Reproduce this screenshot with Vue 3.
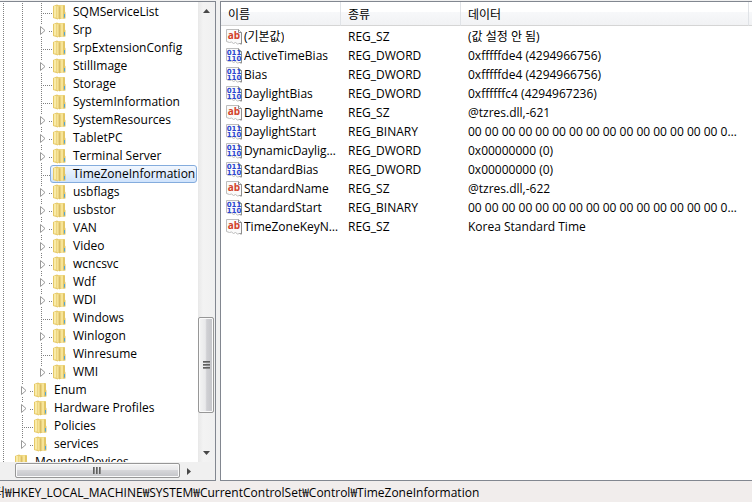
<template>
  <div class="regedit">
    <main class="panes">
      <section class="pane tree-pane">
        <ul class="tree">
          <li v-for="item in keys" :key="item.name" class="node">
            <span v-for="n in item.level" :key="n" class="guide"></span>
            <span class="branch" :class="{ root: item.level === 0, last: item.last }">
              <button v-if="item.open" class="expander" type="button" :aria-label="item.name + ' 확장'">
                <svg width="7" height="9" viewBox="0 0 7 9"><path d="M.5.5 5 4.500.5 8.500Z" fill="#fff" stroke="#989898" /></svg>
              </button>
            </span>
            <button class="entry" :class="{ selected: item.name === current }" type="button" @click="current = item.name">
              <svg class="folder" width="14" height="16" viewBox="0 0 14 16">
                <path d="M0 2 4 .5l1 .5v14.500l-5-1.500Z" fill="#e6c967" />
                <path d="M5 1h6.500l.5 1v12.500l-7 .5Z" fill="#ecd47a" />
                <path d="M1 2h2v11.500H1Z" fill="#f9eba8" />
                <path d="M3 1.500 7 2.500v13l-4-1.500Z" fill="#edd582" />
                <path d="M4.500 2.500v11.500" stroke="#f6e496" />
                <path d="M6.500 2.500h1v12.500h-1Z" fill="#c9a84a" />
                <path d="M7.500 1.500h2.500v13H7.500Z" fill="#f7e498" />
                <path d="M10 1.500h2v6l.5 1v6H10Z" fill="#e3c665" />
                <path d="M11.500 10v3.500" stroke="#4fa5d8" />
              </svg>
              <span class="key-name">{{ item.name }}</span>
            </button>
          </li>
        </ul>
        <div class="scrollbar vertical">
          <button class="arrow" type="button" aria-label="위로">
            <svg width="7" height="4" viewBox="0 0 7 4"><path d="M0 4 3.500 0 7 4Z" fill="#484848" /></svg>
          </button>
          <div class="space before"></div>
          <div class="thumb"><i></i><i></i><i></i></div>
          <div class="space after"></div>
          <button class="arrow" type="button" aria-label="아래로">
            <svg width="7" height="4" viewBox="0 0 7 4"><path d="M0 0 3.500 4 7 0Z" fill="#484848" /></svg>
          </button>
        </div>
        <div class="scrollbar horizontal">
          <div class="space before"></div>
          <div class="thumb"><i></i><i></i><i></i></div>
          <button class="arrow" type="button" aria-label="오른쪽으로">
            <svg width="4" height="7" viewBox="0 0 4 7"><path d="M0 0 4 3.500 0 7Z" fill="#484848" /></svg>
          </button>
        </div>
        <div class="corner"></div>
      </section>

      <section class="pane list-pane">
        <table class="values">
          <colgroup>
            <col class="col-name">
            <col class="col-type">
            <col>
            <col class="col-rest">
          </colgroup>
          <thead>
            <tr>
              <th>이름</th>
              <th>종류</th>
              <th>데이터</th>
              <td></td>
            </tr>
          </thead>
          <tbody>
            <tr v-for="value in values" :key="value.name">
              <td class="name">
                <div class="name-cell">
                  <svg class="value-icon" width="17" height="16" viewBox="0 0 17 16">
                    <path d="M.5.5h12l3 3v11.500l-2-.5-2 .5-2-1.500-2 1-2-1.500-2 .5-3-1Z" fill="#fafafa" stroke="#bdbdbd" />
                    <path d="M12.500.5v3h3M15.500 3.500v11.500l-2-.5" fill="none" stroke="#8e8e8e" />
                    <text v-if="value.type === 'REG_SZ'" class="glyph-ab" x="8" y="10" text-anchor="middle">ab</text>
                    <template v-else>
                      <text class="glyph-bin" x="8" y="7" text-anchor="middle">011</text>
                      <text class="glyph-bin" x="8" y="13" text-anchor="middle">110</text>
                    </template>
                  </svg>
                  <span class="ellipsis">{{ value.name }}</span>
                </div>
              </td>
              <td>{{ value.type }}</td>
              <td class="ellipsis">{{ value.data }}</td>
              <td></td>
            </tr>
          </tbody>
        </table>
      </section>
    </main>
    <footer class="status"><span class="path">터₩HKEY_LOCAL_MACHINE₩SYSTEM₩CurrentControlSet₩Control₩{{ current }}</span></footer>
  </div>
</template>

<script setup>
import { ref } from 'vue'

const current = ref('TimeZoneInformation')

const keys = [
  { name: 'SQMServiceList', level: 2 },
  { name: 'Srp', level: 2, open: true },
  { name: 'SrpExtensionConfig', level: 2 },
  { name: 'StillImage', level: 2, open: true },
  { name: 'Storage', level: 2 },
  { name: 'SystemInformation', level: 2 },
  { name: 'SystemResources', level: 2, open: true },
  { name: 'TabletPC', level: 2, open: true },
  { name: 'Terminal Server', level: 2, open: true },
  { name: 'TimeZoneInformation', level: 2 },
  { name: 'usbflags', level: 2, open: true },
  { name: 'usbstor', level: 2, open: true },
  { name: 'VAN', level: 2, open: true },
  { name: 'Video', level: 2, open: true },
  { name: 'wcncsvc', level: 2, open: true },
  { name: 'Wdf', level: 2, open: true },
  { name: 'WDI', level: 2, open: true },
  { name: 'Windows', level: 2 },
  { name: 'Winlogon', level: 2, open: true },
  { name: 'Winresume', level: 2 },
  { name: 'WMI', level: 2, open: true, last: true },
  { name: 'Enum', level: 1, open: true },
  { name: 'Hardware Profiles', level: 1, open: true },
  { name: 'Policies', level: 1 },
  { name: 'services', level: 1, open: true, last: true },
  { name: 'MountedDevices', level: 0 }
]

const bytes = Array(20).fill('00').join(' ')

const values = [
  { name: '(기본값)', type: 'REG_SZ', data: '(값 설정 안 됨)' },
  { name: 'ActiveTimeBias', type: 'REG_DWORD', data: '0xfffffde4 (4294966756)' },
  { name: 'Bias', type: 'REG_DWORD', data: '0xfffffde4 (4294966756)' },
  { name: 'DaylightBias', type: 'REG_DWORD', data: '0xffffffc4 (4294967236)' },
  { name: 'DaylightName', type: 'REG_SZ', data: '@tzres.dll,-621' },
  { name: 'DaylightStart', type: 'REG_BINARY', data: bytes },
  { name: 'DynamicDaylightTimeDisabled', type: 'REG_DWORD', data: '0x00000000 (0)' },
  { name: 'StandardBias', type: 'REG_DWORD', data: '0x00000000 (0)' },
  { name: 'StandardName', type: 'REG_SZ', data: '@tzres.dll,-622' },
  { name: 'StandardStart', type: 'REG_BINARY', data: bytes },
  { name: 'TimeZoneKeyName', type: 'REG_SZ', data: 'Korea Standard Time' }
]
</script>

<style>
body {
  margin: 0;
}
</style>

<style scoped>
.regedit {
  display: flex;
  flex-direction: column;
  height: 100vh;
  overflow: hidden;
  background: #f0f0f0;
  color: #000;
  font: 12px/18px "Open Sans", "Noto Sans CJK KR", sans-serif;
}

button {
  margin: 0;
  padding: 0;
  border: 0;
  background: none;
  color: inherit;
  font: inherit;
}

svg {
  display: block;
  flex: none;
}

.panes {
  flex: 1;
  min-height: 0;
  display: flex;
  gap: 4px;
  padding-top: 1px;
}

.pane {
  box-sizing: border-box;
  border: 1px solid #828790;
  background: #fff;
}

.tree-pane {
  flex: none;
  width: 216px;
  border-left: 0;
  display: grid;
  grid-template: minmax(0, 1fr) 18px / minmax(0, 1fr) 17px;
}

.tree {
  margin: 0;
  padding: 1px 0 0;
  overflow: hidden;
  list-style: none;
}

.node {
  display: flex;
  height: 18px;
}

.guide {
  flex: none;
  width: 19px;
  background: repeating-linear-gradient(#808080 0 1px, transparent 1px 2px) 3px 0 / 1px 100% no-repeat;
}

.branch {
  position: relative;
  flex: none;
  width: 12px;
  background: repeating-linear-gradient(#808080 0 1px, transparent 1px 2px) 3px 0 / 1px 100% no-repeat;
}

.branch.last {
  background-size: 1px 9px;
}

.branch::after {
  content: "";
  position: absolute;
  top: 10px;
  left: 5px;
  width: 10px;
  height: 1px;
  background: repeating-linear-gradient(90deg, #808080 0 1px, transparent 1px 2px);
}

.branch.root::after {
  display: none;
}

.expander {
  position: absolute;
  z-index: 1;
  top: 4px;
  left: 1px;
  width: 10px;
  padding: 1px;
  background: #fff;
}

.entry {
  position: relative;
  display: flex;
  align-items: center;
  gap: 6px;
  box-sizing: border-box;
  height: 18px;
  padding: 0 1px 0 2px;
  border: 1px solid transparent;
  border-radius: 3px;
  white-space: nowrap;
}

.entry.selected {
  border-color: #84acdd;
  background: linear-gradient(#f2f7fe, #cfe3fc);
}

.scrollbar {
  display: flex;
  background: #f0f0f0;
}

.vertical {
  flex-direction: column;
  padding-right: 1px;
  background: linear-gradient(90deg, #e8e8e8, #f3f3f3 30%, #f0f0f0);
}

.arrow {
  flex: none;
  display: flex;
  align-items: center;
  justify-content: center;
  width: 17px;
  height: 17px;
}

.vertical .arrow {
  width: 16px;
  height: 18px;
}

.vertical .before {
  flex: 298;
}

.vertical .after {
  flex: 31;
}

.thumb {
  display: flex;
  align-items: center;
  justify-content: center;
  gap: 1px;
  box-sizing: border-box;
  border: 1px solid #979797;
  border-radius: 2px;
  box-shadow: inset 0 0 0 1px #fafafa;
}

.vertical .thumb {
  flex: 95;
  flex-direction: column;
  background: linear-gradient(90deg, #f4f4f4, #e9e9eb 45%, #d0d0d4 55%, #c3c4c8);
}

.vertical .thumb i {
  width: 7px;
  height: 2px;
  background: linear-gradient(#4a4a4a, #a0a0a0);
}

.horizontal {
  padding: 1px 1px 2px 0;
}

.horizontal .before {
  flex: 15;
}

.horizontal .thumb {
  flex: 164;
  background: linear-gradient(#f4f4f4, #e9e9eb 45%, #d6d6d9 50%, #c3c4c8);
}

.horizontal .thumb i {
  width: 2px;
  height: 7px;
  background: linear-gradient(90deg, #4a4a4a, #a0a0a0);
}

.corner {
  background: #f0f0f0;
}

.list-pane {
  flex: 1;
  min-width: 0;
  border-right: 0;
  overflow: hidden;
}

.values {
  width: 100%;
  table-layout: fixed;
  border-collapse: separate;
  border-spacing: 0;
  line-height: 19px;
}

.col-name,
.col-type {
  width: 120px;
}

.col-rest {
  width: 3px;
}

.values td,
.values th {
  padding: 0 6px 0 7px;
  text-align: left;
  white-space: nowrap;
  font-weight: normal;
}

.values thead th,
.values thead td {
  height: 24px;
  padding-top: 2px;
  box-sizing: border-box;
  border-bottom: 1px solid #d5d5d5;
  background: linear-gradient(#fff 0 45%, #f7f8fa 45%, #f1f2f4);
}

.values thead td {
  padding: 0;
}

.values thead th {
  border-right: 1px solid #e0e3e7;
}

.values tbody tr:first-child td {
  border-top: 1px solid transparent;
}

.values tbody td {
  height: 19px;
}

.values td:last-child {
  padding: 0;
}

.values td.name {
  padding: 0 0 0 5px;
}

.name-cell {
  display: flex;
  align-items: center;
  gap: 1px;
}

.ellipsis {
  min-width: 0;
  overflow: hidden;
  text-overflow: ellipsis;
}

.glyph-ab {
  fill: #d2432a;
  font: bold 10px "Open Sans", sans-serif;
}

.glyph-bin {
  fill: #2b46d0;
  font: bold 7px "DejaVu Sans", sans-serif;
}

.status {
  flex: none;
  height: 21px;
  overflow: hidden;
  background: #f1edec;
  line-height: 24px;
  white-space: nowrap;
}

.path {
  margin-left: -6px;
}
</style>
